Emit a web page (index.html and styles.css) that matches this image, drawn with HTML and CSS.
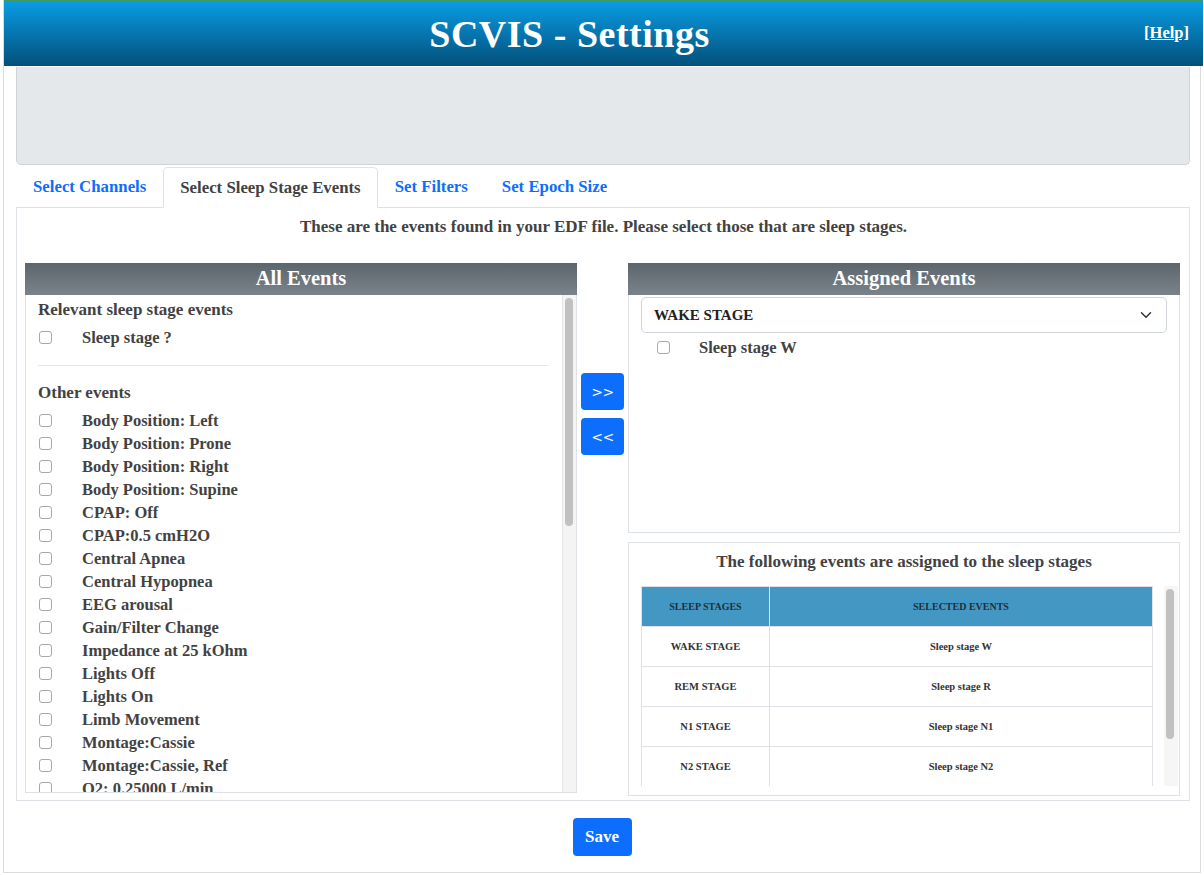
FILE: index.html
```html
<!DOCTYPE html>
<html lang="en">
<head>
<meta charset="utf-8">
<title>SCVIS - Settings</title>
<link rel="stylesheet" href="styles.css">
</head>
<body>
<div class="page">
  <header class="topbar">
    <h1 class="title">SCVIS - Settings</h1>
    <a class="help" href="#">[Help]</a>
  </header>

  <div class="infobox"></div>

  <nav class="tabs">
    <a class="tab" href="#">Select Channels</a>
    <a class="tab active" href="#">Select Sleep Stage Events</a>
    <a class="tab" href="#">Set Filters</a>
    <a class="tab" href="#">Set Epoch Size</a>
  </nav>

  <section class="tabpane">
    <p class="intro">These are the events found in your EDF file. Please select those that are sleep stages.</p>

    <div class="columns">
      <div class="panel">
        <div class="panel-head">All Events</div>
        <div class="list">
          <div class="list-body">
            <div class="group-title">Relevant sleep stage events</div>
            <label class="item"><span class="cb"></span><span>Sleep stage ?</span></label>
            <hr class="divider">
            <div class="group-title">Other events</div>
            <label class="item"><span class="cb"></span><span>Body Position: Left</span></label>
            <label class="item"><span class="cb"></span><span>Body Position: Prone</span></label>
            <label class="item"><span class="cb"></span><span>Body Position: Right</span></label>
            <label class="item"><span class="cb"></span><span>Body Position: Supine</span></label>
            <label class="item"><span class="cb"></span><span>CPAP: Off</span></label>
            <label class="item"><span class="cb"></span><span>CPAP:0.5 cmH2O</span></label>
            <label class="item"><span class="cb"></span><span>Central Apnea</span></label>
            <label class="item"><span class="cb"></span><span>Central Hypopnea</span></label>
            <label class="item"><span class="cb"></span><span>EEG arousal</span></label>
            <label class="item"><span class="cb"></span><span>Gain/Filter Change</span></label>
            <label class="item"><span class="cb"></span><span>Impedance at 25 kOhm</span></label>
            <label class="item"><span class="cb"></span><span>Lights Off</span></label>
            <label class="item"><span class="cb"></span><span>Lights On</span></label>
            <label class="item"><span class="cb"></span><span>Limb Movement</span></label>
            <label class="item"><span class="cb"></span><span>Montage:Cassie</span></label>
            <label class="item"><span class="cb"></span><span>Montage:Cassie, Ref</span></label>
            <label class="item"><span class="cb"></span><span>O2: 0.25000 L/min</span></label>
            <label class="item"><span class="cb"></span><span>O2: 0.50000 L/min</span></label>
            <label class="item"><span class="cb"></span><span>Obstructive Apnea</span></label>
          </div>
          <div class="vscroll"><div class="thumb list-thumb"></div></div>
        </div>
      </div>

      <div class="movers">
        <button class="btn mover" type="button">&gt;&gt;</button>
        <button class="btn mover" type="button">&lt;&lt;</button>
      </div>

      <div class="panel">
        <div class="panel-head">Assigned Events</div>
        <div class="assigned">
          <div class="select">
            <span>WAKE STAGE</span>
            <svg class="chev" width="12" height="12" viewBox="0 0 16 16"><path d="M2 5l6 6 6-6" fill="none" stroke="#333" stroke-width="2" stroke-linecap="round" stroke-linejoin="round"/></svg>
          </div>
          <label class="item assigned-item"><span class="cb"></span><span>Sleep stage W</span></label>
        </div>
        <div class="summary">
          <div class="summary-title">The following events are assigned to the sleep stages</div>
          <div class="table-wrap">
            <div class="table-body">
              <table class="stages">
                <thead>
                  <tr><th class="c1">SLEEP STAGES</th><th>SELECTED EVENTS</th></tr>
                </thead>
                <tbody>
                  <tr><td>WAKE STAGE</td><td>Sleep stage W</td></tr>
                  <tr><td>REM STAGE</td><td>Sleep stage R</td></tr>
                  <tr><td>N1 STAGE</td><td>Sleep stage N1</td></tr>
                  <tr><td>N2 STAGE</td><td>Sleep stage N2</td></tr>
                  <tr><td>N3 STAGE</td><td>Sleep stage N3</td></tr>
                </tbody>
              </table>
            </div>
            <div class="vscroll table-scroll"><div class="thumb table-thumb"></div></div>
          </div>
        </div>
      </div>
    </div>
  </section>

  <div class="actions">
    <button class="btn save" type="button">Save</button>
  </div>
</div>
</body>
</html>
```

FILE: styles.css
```css
* { box-sizing: border-box; }

html, body {
  margin: 0;
  padding: 0;
  background: #fff;
  overflow: hidden;
}

body {
  font-family: "Liberation Serif", "DejaVu Serif", serif;
  font-weight: 700;
  color: #424242;
  font-size: 16.5px;
}

.page {
  margin-left: 3px;
  width: 1198px;
  height: 873px;
  border-left: 1px solid #dcdcdc;
  border-right: 1px solid #dcdcdc;
  border-bottom: 1px solid #dcdcdc;
}

.topbar {
  position: relative;
  height: 66px;
  margin-right: -3px;
  border-top: 2px solid #3f9a5c;
  background: linear-gradient(to bottom, #0a9ce2 0%, #0679b4 45%, #03507a 100%);
  display: flex;
  align-items: center;
  justify-content: center;
}

.title {
  margin: 0 0 0 -68px;
  color: #fff;
  font-size: 38px;
  font-weight: 700;
  letter-spacing: 0.5px;
}

.help {
  position: absolute;
  right: 14px;
  top: 21px;
  color: #fff;
  font-size: 16.5px;
  text-decoration: underline;
}

.infobox {
  margin: 1px 10px 0 12px;
  height: 98px;
  background: #e5e8eb;
  border: 1px solid #cfd3d7;
  border-top: none;
  border-radius: 0 0 5px 5px;
}

.tabs {
  display: flex;
  margin: 2px 10px 0 12px;
  height: 40px;
  position: relative;
  z-index: 1;
}

.tab {
  display: flex;
  align-items: center;
  padding: 0 16px;
  color: #0d6efd;
  text-decoration: none;
  font-size: 16.8px;
  border: 1px solid transparent;
  border-radius: 5px 5px 0 0;
}

.tab.active {
  color: #424242;
  background: #fff;
  border-color: #dee2e6 #dee2e6 #fff;
  height: 41px;
}

.tabpane {
  margin: 0 10px 0 12px;
  height: 594px;
  border: 1px solid #dee2e6;
  padding: 9px 7px 7px 8px;
}

.intro {
  margin: 0;
  text-align: center;
  line-height: 20px;
  font-size: 17px;
  height: 46px;
}

.columns {
  display: flex;
  align-items: flex-start;
}

.panel {
  width: 552px;
  display: flex;
  flex-direction: column;
  flex: none;
}

.panel > * { flex: none; }

.panel-head {
  height: 32px;
  background: linear-gradient(to bottom, #5d656c 0%, #7a838b 100%);
  color: #fff;
  font-size: 20.5px;
  text-align: center;
  line-height: 30px;
}

.list {
  height: 498px;
  border: 1px solid #dee2e6;
  border-top: none;
  display: flex;
}

.list-body {
  flex: 1;
  overflow: hidden;
  padding: 5px 14px 0 12px;
}

.group-title {
  font-size: 17px;
  height: 20px;
  line-height: 20px;
  margin-bottom: 6px;
}

.item {
  display: flex;
  align-items: center;
  height: 23px;
  font-size: 16.5px;
}

.cb {
  width: 13px;
  height: 13px;
  border: 1px solid #a8a8a8;
  border-radius: 3px;
  margin-left: 1px;
  margin-right: 30px;
  flex: none;
  background: #fff;
}

.divider {
  border: none;
  border-top: 1px solid #e4e6e8;
  margin: 16px 0 17px 0;
}

.vscroll {
  width: 14px;
  flex: none;
  background: #f4f4f4;
  border-left: 1px solid #e6e6e6;
  padding: 3px 2px 0 2px;
}

.thumb {
  background: #c1c1c1;
  border-radius: 5px;
  width: 8px;
}

.list-thumb { height: 228px; }

.movers {
  width: 51px;
  flex: none;
  display: flex;
  flex-direction: column;
  align-items: center;
  padding-top: 110px;
  gap: 8px;
}

.btn {
  border: none;
  background: #0d6efd;
  color: #fff;
  border-radius: 4px;
  cursor: pointer;
}

.mover {
  width: 43px;
  height: 37px;
  font-family: "DejaVu Sans", "Noto Sans", sans-serif;
  font-weight: 400;
  font-size: 14px;
  letter-spacing: -0.5px;
}

.assigned {
  height: 238px;
  border: 1px solid #dee2e6;
  border-top: none;
  padding: 2px 12px 0 12px;
}

.select {
  height: 36px;
  border: 1px solid #ced4da;
  border-radius: 5px;
  display: flex;
  align-items: center;
  justify-content: space-between;
  padding: 0 14px 0 12px;
  font-size: 15px;
  color: #222;
}

.chev { display: block; }

.assigned-item {
  margin-top: 3px;
  padding-left: 15px;
}
.assigned-item .cb { margin-right: 29px; }

.summary {
  margin-top: 9px;
  height: 254px;
  border: 1px solid #dee2e6;
  padding: 8px 0 0 12px;
}

.summary-title {
  text-align: center;
  font-size: 17px;
  line-height: 22px;
  height: 35px;
  padding-right: 12px;
}

.table-wrap {
  width: 537px;
  height: 200px;
  display: flex;
}

.table-body {
  flex: 1;
  overflow: hidden;
}

.table-scroll {
  border-left: none;
  background: #f6f6f6;
  margin-left: 10px;
}

.table-thumb { height: 150px; }

.stages {
  width: 512px;
  border-collapse: collapse;
  table-layout: fixed;
  color: #333;
}

.stages th, .stages td {
  height: 40px;
  border: 1px solid #dee2e6;
  text-align: center;
  vertical-align: middle;
  padding: 0 4px;
}

.stages th {
  background: #4398c3;
  font-size: 10px;
  color: #1f2f3a;
  font-weight: 700;
}

.stages th.c1 { width: 128px; }

.stages td {
  font-size: 10.5px;
}

.actions {
  display: flex;
  justify-content: center;
  padding-top: 17px;
}

.save {
  width: 59px;
  height: 38px;
  font-family: "Liberation Serif", serif;
  font-weight: 700;
  font-size: 17px;
}
```
